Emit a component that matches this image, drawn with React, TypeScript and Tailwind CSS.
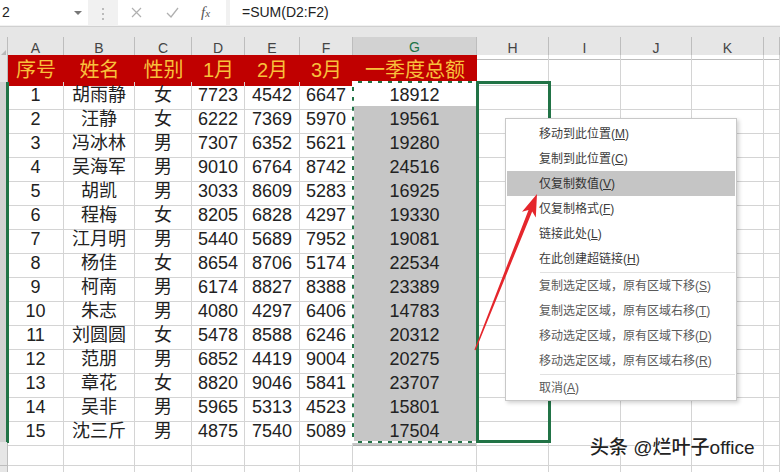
import React from "react";

type Row = [number, string, string, number, number, number, number];

const rows: Row[] = [
  [1, "胡雨静", "女", 7723, 4542, 6647, 18912],
  [2, "汪静", "女", 6222, 7369, 5970, 19561],
  [3, "冯冰林", "男", 7307, 6352, 5621, 19280],
  [4, "吴海军", "男", 9010, 6764, 8742, 24516],
  [5, "胡凯", "男", 3033, 8609, 5283, 16925],
  [6, "程梅", "女", 8205, 6828, 4297, 19330],
  [7, "江月明", "男", 5440, 5689, 7952, 19081],
  [8, "杨佳", "女", 8654, 8706, 5174, 22534],
  [9, "柯南", "男", 6174, 8827, 8388, 23389],
  [10, "朱志", "男", 4080, 4297, 6406, 14783],
  [11, "刘圆圆", "女", 5478, 8588, 6246, 20312],
  [12, "范朋", "男", 6852, 4419, 9004, 20275],
  [13, "章花", "女", 8820, 9046, 5841, 23707],
  [14, "吴非", "男", 5965, 5313, 4523, 15801],
  [15, "沈三斤", "男", 4875, 7540, 5089, 17504],
];

const COLS =
  "grid grid-cols-[8px_56px_71px_57px_53px_55px_53px_124px_72px_72px_71px_72px_16px]";

const letters = ["A", "B", "C", "D", "E", "F", "G", "H", "I", "J", "K", ""];
const headings = ["序号", "姓名", "性别", "1月", "2月", "3月", "一季度总额"];

const cell = "flex items-center justify-center border-r border-b border-[#d4d4d4]";

// context menu entries; null = separator
const menu: ([string, string, boolean] | null)[] = [
  ["移动到此位置", "M", false],
  ["复制到此位置", "C", false],
  ["仅复制数值", "V", true],
  ["仅复制格式", "F", false],
  ["链接此处", "L", false],
  ["在此创建超链接", "H", false],
  null,
  ["复制选定区域，原有区域下移", "S", false],
  ["复制选定区域，原有区域右移", "T", false],
  ["移动选定区域，原有区域下移", "D", false],
  ["移动选定区域，原有区域右移", "R", false],
  null,
  ["取消", "A", false],
];

function FormulaBar() {
  return (
    <div className="flex h-[27px] bg-[#f1f1f1] border-b border-[#d0d0d0]">
      <div className="relative w-[88px] h-[25px] bg-white text-[14px] text-[#222] flex items-center pl-[2px]">
        2
        <span className="absolute left-[74px] top-[11px] w-0 h-0 border-l-[4px] border-r-[4px] border-t-[4px] border-l-transparent border-r-transparent border-t-[#777]" />
      </div>
      <div className="w-[30px] flex flex-col items-center pt-[8px] gap-[3px]">
        <span className="w-[2px] h-[2px] bg-[#bbb]" />
        <span className="w-[2px] h-[2px] bg-[#bbb]" />
        <span className="w-[2px] h-[2px] bg-[#bbb]" />
      </div>
      <div className="w-[108px] h-[25px] bg-white flex items-center">
        <svg className="ml-[13px]" width="11" height="11" viewBox="0 0 11 11">
          <path d="M1 1L10 10M10 1L1 10" stroke="#b0b0b0" strokeWidth="1.2" />
        </svg>
        <svg className="ml-[24px]" width="13" height="11" viewBox="0 0 13 11">
          <path d="M1 6L5 10L12 1" stroke="#b0b0b0" strokeWidth="1.3" fill="none" />
        </svg>
        <span className="ml-[22px] italic font-['Liberation_Serif',serif] text-[15px] text-[#555] leading-none">
          f<span className="text-[11px]">x</span>
        </span>
      </div>
      <div className="ml-[4px] flex-1 h-[25px] bg-white flex items-center pl-[12px] text-[14px] text-[#222]">
        =SUM(D2:F2)
      </div>
    </div>
  );
}

function ColumnHeader() {
  return (
    <div className="bg-[#e6e6e6] pt-[10px]">
      <div className={`${COLS} h-[18px] text-[14px] text-[#444]`}>
        <div className="relative border-r border-b border-[#bdbdbd]">
          <span className="absolute right-[1px] bottom-[2px] w-0 h-0 border-b-[7px] border-l-[7px] border-b-[#b8b8b8] border-l-transparent" />
        </div>
        {letters.map((l) =>
          l === "G" ? (
            <div
              key={l}
              className="flex items-center justify-center bg-[#d2d2d2] text-[#217346] border-r border-[#bdbdbd] border-b-2 border-b-[#217346]"
            >
              {l}
            </div>
          ) : (
            <div
              key={l || "x"}
              className="flex items-center justify-center border-r border-b border-[#bdbdbd]"
            >
              {l}
            </div>
          )
        )}
      </div>
    </div>
  );
}

function TitleRow() {
  return (
    <div className={`${COLS} h-[27px]`}>
      <div className="bg-[#e6e6e6] border-r border-b border-[#bdbdbd]" />
      {headings.map((h) => (
        <div
          key={h}
          className="flex items-center justify-center bg-[#c00000] text-[#f8c03c] text-[20px] border-b border-[#c00000]"
        >
          {h}
        </div>
      ))}
      {[0, 1, 2, 3, 4].map((i) => (
        <div key={i} className={cell} />
      ))}
    </div>
  );
}

function DataRow({ r, idx }: { r: Row; idx: number }) {
  return (
    <div className={`${COLS} h-[24px] text-[18px] text-[#222]`}>
      <div className="bg-[#d2d2d2] border-b border-[#bdbdbd] border-r-2 border-r-[#217346]" />
      <div className={cell}>{r[0]}</div>
      <div className={cell}>{r[1]}</div>
      <div className={cell}>{r[2]}</div>
      <div className={cell}>{r[3]}</div>
      <div className={cell}>{r[4]}</div>
      <div className={cell}>{r[5]}</div>
      <div
        className={
          idx === 0
            ? "flex items-center justify-center bg-white border-r border-b border-[#d4d4d4]"
            : "flex items-center justify-center bg-[#c6c6c6] border-r border-b border-[#adadad]"
        }
      >
        {r[6]}
      </div>
      {[0, 1, 2, 3, 4].map((i) => (
        <div key={i} className={cell} />
      ))}
    </div>
  );
}

function EmptyRow() {
  return (
    <div className={`${COLS} h-[24px]`}>
      <div className="bg-[#e6e6e6] border-r border-b border-[#bdbdbd]" />
      {letters.map((l, i) => (
        <div key={i} className={cell} />
      ))}
    </div>
  );
}

function ContextMenu() {
  return (
    <div className="absolute left-[505px] top-[118px] w-[232px] bg-white border border-[#c8c8c8] shadow-[2px_2px_4px_rgba(0,0,0,0.18)] pt-[2px] px-[1px] text-[12px]">
      {menu.map((m, i) =>
        m === null ? (
          <div key={i} className="ml-[33px] my-[0.5px] h-px bg-[#e1e1e1]" />
        ) : (
          <div
            key={i}
            className={`h-[25px] flex items-center pl-[32px] ${
              m[2] ? "bg-[#c5c5c5] text-[#333]" : i < 6 ? "text-[#3c3c3c]" : "text-[#5a5a5a]"
            }`}
          >
            {m[0]}(<u>{m[1]}</u>)
          </div>
        )
      )}
    </div>
  );
}

function Arrow() {
  return (
    <svg
      className="absolute left-[460px] top-[180px]"
      width="90"
      height="180"
      viewBox="0 0 90 180"
    >
      <polygon
        points="15.6,170.2 72.2,31.5 75.8,37.4 77,14 62,31.8 68.5,30 14.4,169.8"
        fill="#e5262c"
      />
    </svg>
  );
}

export default function App() {
  return (
    <div className="w-[780px] h-[472px] overflow-hidden bg-white font-['Liberation_Sans','Noto_Sans_CJK_SC',sans-serif]">
      <FormulaBar />
      <ColumnHeader />
      <div className="relative">
        <TitleRow />
        {rows.map((r, i) => (
          <DataRow key={r[0]} r={r} idx={i} />
        ))}
        <EmptyRow />
        <EmptyRow />

        {/* copy selection marching ants on G2:G16 */}
        <div className="absolute left-[352px] top-[26px] w-[126px] h-[362px] border-2 border-[#217346]" />
        <div className="absolute left-[352px] top-[26px] w-[126px] h-[362px] border-2 border-dashed border-white" />
        {/* drag outline on H2:H16 */}
        <div className="absolute left-[476px] top-[26px] w-[75px] h-[362px] border-[3px] border-[#217346]" />
        {/* row headers left edge */}
        <div className="absolute left-[7px] top-[27px] w-[2px] h-[361px] bg-[#217346]" />
      </div>
      <div className="absolute left-0 top-0 w-[780px] h-[472px] pointer-events-none">
        <ContextMenu />
        <Arrow />
        <div className="absolute left-[590px] top-[434px] text-[19px] font-medium text-[#222] font-['Liberation_Sans','Noto_Sans_CJK_SC',sans-serif] [text-shadow:0_0_2px_#fff,0_0_2px_#fff,1px_1px_1px_#fff]">
          头条 @烂叶子office
        </div>
      </div>
    </div>
  );
}
